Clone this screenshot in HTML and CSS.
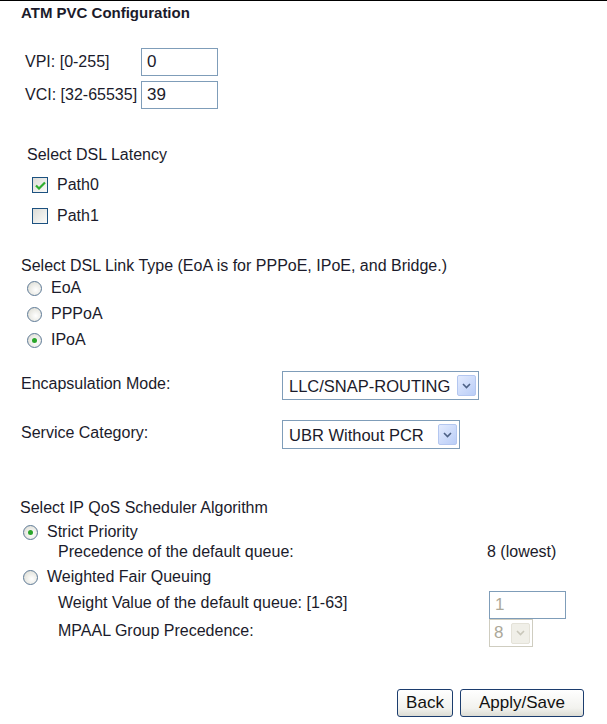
FILE: index.html
```html
<!DOCTYPE html>
<html lang="en">
<head>
    <meta charset="UTF-8">
    <title>ATM PVC Configuration</title>
    <link rel="stylesheet" href="styles.css">
</head>
<body>
    <div class="page">
        <h1 class="title">ATM PVC Configuration</h1>

        <!-- VPI / VCI -->
        <div class="pvc">
            <div class="pvc-row">
                <span class="pvc-label">VPI: [0-255]</span>
                <span class="text-box">0</span>
            </div>
            <div class="pvc-row">
                <span class="pvc-label">VCI: [32-65535]</span>
                <span class="text-box">39</span>
            </div>
        </div>

        <!-- DSL latency -->
        <div class="latency">
            <div class="latency-head">Select DSL Latency</div>
            <div class="check-row">
                <span class="checkbox">
                    <svg width="11" height="9" viewBox="0 0 11 9"><path d="M1 4.5 L4 7.5 L10 1.5" fill="none" stroke="#2fae2f" stroke-width="2.2"/></svg>
                </span>
                Path0
            </div>
            <div class="check-row">
                <span class="checkbox"></span>
                Path1
            </div>
        </div>

        <!-- link type -->
        <div class="link-type">
            <div class="link-head">Select DSL Link Type (EoA is for PPPoE, IPoE, and Bridge.)</div>
            <div class="radio-row"><span class="radio"></span>EoA</div>
            <div class="radio-row"><span class="radio"></span>PPPoA</div>
            <div class="radio-row"><span class="radio on"></span>IPoA</div>
        </div>

        <!-- encapsulation / service -->
        <div class="options">
            <div class="opt-row">
                <span class="opt-label">Encapsulation Mode:</span>
                <div class="select encap">
                    <span class="select-text">LLC/SNAP-ROUTING</span>
                    <span class="select-btn"><svg width="9" height="6" viewBox="0 0 9 6"><path d="M1 1 L4.5 4.5 L8 1" fill="none" stroke="#4d6185" stroke-width="1.6"/></svg></span>
                </div>
            </div>
            <div class="opt-row">
                <span class="opt-label">Service Category:</span>
                <div class="select service">
                    <span class="select-text">UBR Without PCR</span>
                    <span class="select-btn"><svg width="9" height="6" viewBox="0 0 9 6"><path d="M1 1 L4.5 4.5 L8 1" fill="none" stroke="#4d6185" stroke-width="1.6"/></svg></span>
                </div>
            </div>
        </div>

        <!-- QoS scheduler -->
        <div class="qos">
            <div class="qos-head">Select IP QoS Scheduler Algorithm</div>
            <div class="radio-row qos-radio strict"><span class="radio on"></span>Strict Priority</div>
            <div class="qos-sub">
                <span>Precedence of the default queue:</span>
                <span class="qos-value">8 (lowest)</span>
            </div>
            <div class="radio-row qos-radio wfq"><span class="radio"></span>Weighted Fair Queuing</div>
            <div class="qos-sub tall weight">
                <span>Weight Value of the default queue: [1-63]</span>
                <span class="text-box disabled">1</span>
            </div>
            <div class="qos-sub tall">
                <span>MPAAL Group Precedence:</span>
                <div class="select disabled mpaal">
                    <span class="select-text">8</span>
                    <span class="select-btn"><svg width="9" height="6" viewBox="0 0 9 6"><path d="M1 1 L4.5 4.5 L8 1" fill="none" stroke="#c9c7ba" stroke-width="1.6"/></svg></span>
                </div>
            </div>
        </div>

        <div class="actions">
            <button class="btn back">Back</button>
            <button class="btn save">Apply/Save</button>
        </div>
    </div>
</body>
</html>
```

FILE: styles.css
```css
/* Page */
body {
    margin: 0;
    background: #fff;
    color: #1b1b2b;
    font-family: "Liberation Sans", Arial, sans-serif;
    font-size: 16px;
    line-height: 18px;
    border-top: 1px solid #000;
}

.page {
    padding: 4px 0 0 0;
    width: 607px;
}

/* Title */
.title {
    margin: 0 0 0 21px;
    font-size: 15px;
    font-weight: bold;
    line-height: 16px;
}

/* VPI / VCI */
.pvc {
    margin: 27px 0 0 25px;
    display: flex;
    flex-direction: column;
    gap: 5px;
}

.pvc-row {
    display: flex;
    align-items: center;
}

.pvc-label {
    width: 116px;
}

.text-box {
    box-sizing: border-box;
    width: 77px;
    height: 28px;
    border: 1px solid #7f9db9;
    padding: 4px 0 0 5px;
    font-size: 17px;
    line-height: 18px;
    background: #fff;
}

.text-box.disabled {
    color: #aca899;
}

/* Checkboxes */
.latency {
    margin: 37px 0 0 27px;
}

.check-row {
    display: flex;
    align-items: center;
    gap: 9px;
    margin: 11px 0 0 5px;
    line-height: 20px;
}

.checkbox {
    box-sizing: border-box;
    width: 16px;
    height: 16px;
    border: 1px solid #1c5180;
    background: linear-gradient(135deg, #dcdcd7, #fbfbf9);
    display: flex;
    align-items: center;
    justify-content: center;
}

/* Radios */
.link-type {
    margin: 31px 0 0 21px;
}

.radio-row {
    display: flex;
    align-items: center;
    gap: 9px;
    margin: 0 0 0 6px;
    height: 26px;
    line-height: 20px;
}

.radio {
    box-sizing: border-box;
    width: 15px;
    height: 15px;
    border-radius: 50%;
    border: 1px solid #5e7a96;
    background: radial-gradient(circle at 60% 60%, #fff 0%, #e8e8e2 60%, #d2d2cc 100%);
    position: relative;
}

.radio.on::after {
    content: "";
    position: absolute;
    left: 4px;
    top: 4px;
    width: 5px;
    height: 5px;
    border-radius: 50%;
    background: #2aa52a;
}

/* Selects */
.options {
    margin: 18px 0 0 21px;
    display: flex;
    flex-direction: column;
    gap: 20px;
}

.opt-row {
    display: flex;
    align-items: center;
}

.opt-label {
    width: 261px;
    margin-top: -3px;
}

.select {
    box-sizing: border-box;
    height: 29px;
    border: 1px solid #7f9db9;
    display: flex;
    align-items: center;
    justify-content: space-between;
    padding: 0 2px 0 6px;
    font-size: 16.5px;
    background: #fff;
}

.select.encap {
    width: 197px;
}

.select.service {
    width: 178px;
}

.select-btn {
    box-sizing: border-box;
    width: 19px;
    height: 21px;
    border: 1px solid #b4c7f0;
    border-radius: 2px;
    background: linear-gradient(135deg, #e3ebfe, #b9cdf7);
    display: flex;
    align-items: center;
    justify-content: center;
}

.select.disabled {
    width: 44px;
    height: 28px;
    border-color: #cfcdc0;
    color: #aca899;
    padding-left: 4px;
    font-size: 17px;
}

.select.disabled .select-btn {
    border-color: #e4e2d8;
    background: #f0efe8;
}

/* QoS */
.qos {
    margin: 50px 0 0 20px;
}

.qos-radio {
    margin-left: 3px;
    height: 20px;
}

.qos-radio.strict {
    margin-top: 5px;
}

.qos-radio.wfq {
    margin-top: 5px;
}

.qos-sub {
    display: grid;
    grid-template-columns: 431px auto;
    align-items: center;
    margin-left: 38px;
    height: 20px;
}

.qos-sub.tall {
    height: 28px;
}

.qos-sub.weight {
    margin-top: 4px;
}

.qos-sub.tall > span:first-child {
    margin-top: -4px;
}

.qos-value {
    margin-left: -2px;
}

/* Buttons */
.actions {
    display: flex;
    justify-content: flex-end;
    gap: 7px;
    margin: 42px 23px 0 0;
}

.btn {
    height: 28px;
    padding: 0 8px;
    border: 1px solid #1c3d6e;
    border-radius: 3px;
    background: linear-gradient(#ffffff, #f2f2ee 70%, #dcdcd4);
    font-family: "Liberation Sans", Arial, sans-serif;
    font-size: 17px;
    color: #111;
}

.btn.back {
    width: 56px;
}

.btn.save {
    width: 124px;
}
```
